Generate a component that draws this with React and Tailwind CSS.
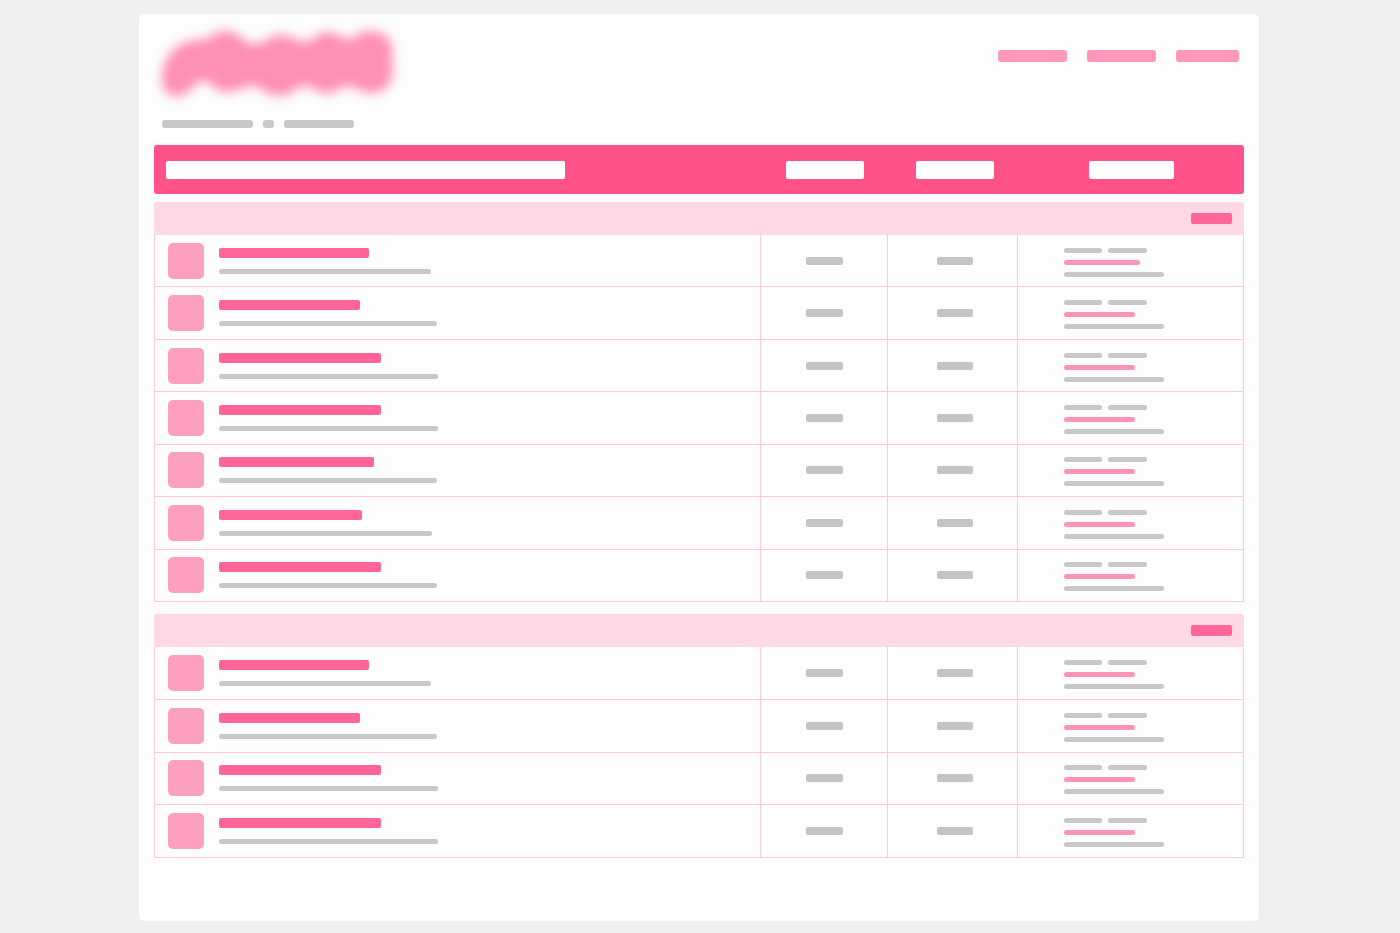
import React from 'react';

const navLinks = [
  { label: 'Home', width: 'w-[69px]' },
  { label: 'Members', width: 'w-[69px]' },
  { label: 'Search', width: 'w-[63px]' },
];

const groups = [
  {
    id: 'general',
    height: 'h-[367px]',
    rows: [
      { title: 'w-[150px]', text: 'w-[212px]', last: 'w-[76px]' },
      { title: 'w-[141px]', text: 'w-[218px]', last: 'w-[71px]' },
      { title: 'w-[162px]', text: 'w-[219px]', last: 'w-[71px]' },
      { title: 'w-[162px]', text: 'w-[219px]', last: 'w-[71px]' },
      { title: 'w-[155px]', text: 'w-[218px]', last: 'w-[71px]' },
      { title: 'w-[143px]', text: 'w-[213px]', last: 'w-[71px]' },
      { title: 'w-[162px]', text: 'w-[218px]', last: 'w-[71px]' },
    ],
  },
  {
    id: 'community',
    height: 'h-[211px]',
    rows: [
      { title: 'w-[150px]', text: 'w-[212px]', last: 'w-[71px]' },
      { title: 'w-[141px]', text: 'w-[218px]', last: 'w-[71px]' },
      { title: 'w-[162px]', text: 'w-[219px]', last: 'w-[71px]' },
      { title: 'w-[162px]', text: 'w-[219px]', last: 'w-[71px]' },
    ],
  },
];

function Logo() {
  return (
    <svg width="250" height="80" viewBox="0 0 250 80" overflow="visible" aria-hidden="true">
      <defs>
        <filter id="logo-blur" x="-15%" y="-40%" width="130%" height="180%" colorInterpolationFilters="sRGB">
          <feGaussianBlur stdDeviation="5.5" />
        </filter>
      </defs>
      <g filter="url(#logo-blur)" fill="#fe8fb5">
        <path d="M8 57C7 35 22 16 45 16C56 16 60 7 73 7C86 7 89 20 101 20C112 20 114 11 126 11C139 11 142 18 151 18C160 18 162 8 173 8C185 8 187 15 195 15C202 15 204 7 216 7C232 7 240 18 238 30C237 38 240 42 238 51C236 64 228 69 216 69C205 69 202 62 195 62C187 62 184 69 173 69C162 69 160 62 151 62C142 62 138 72 125 72C112 72 108 62 98 62C89 62 84 68 72 68C61 68 58 57 49 57C40 57 36 72 24 72C14 72 8 66 8 57Z" />
      </g>
    </svg>
  );
}

function BoardRow({ row }) {
  return (
    <tr>
      <td className="border-b border-l border-[#fdc8d8] pl-[13px]">
        <div className="flex items-center gap-[15px]">
          <div className="w-9 h-9 rounded-[5px] bg-[#fda0c0]" />
          <div className="space-y-[11px]">
            <div className={`h-2.5 rounded-xs bg-[#ff6597] ${row.title}`} />
            <div className={`h-[5px] rounded-full bg-[#c8c8c8] ${row.text}`} />
          </div>
        </div>
      </td>
      <td className="border-b border-l border-[#fdc8d8] pl-[45px]">
        <div className="w-[37px] h-2 rounded-xs bg-[#c4c4c4]" />
      </td>
      <td className="border-b border-l border-[#fdc8d8] pl-[49px]">
        <div className="w-[36px] h-2 rounded-xs bg-[#c4c4c4]" />
      </td>
      <td className="border-b border-x border-[#fdc8d8] pl-[46px] pt-[3px]">
        <div className="space-y-[7px]">
          <div className="flex gap-1.5">
            <div className="w-[38px] h-[5px] rounded-full bg-[#c8c8c8]" />
            <div className="w-[39px] h-[5px] rounded-full bg-[#c8c8c8]" />
          </div>
          <div className={`h-[5px] rounded-full bg-[#fd93b6] ${row.last}`} />
          <div className="w-[100px] h-[5px] rounded-full bg-[#c8c8c8]" />
        </div>
      </td>
    </tr>
  );
}

function BoardGroup({ group }) {
  return (
    <section>
      {/* Group band */}
      <div className="h-[33px] flex items-center justify-end pr-3 rounded-t-[3px] bg-[#fdd9e6]">
        <button type="button" aria-label="Toggle group" className="w-[41px] h-[11px] rounded-xs bg-[#ff6798]" />
      </div>
      <table className={`w-full table-fixed border-separate border-spacing-0 ${group.height}`}>
        <colgroup>
          <col />
          <col className="w-[127px]" />
          <col className="w-[130px]" />
          <col className="w-[227px]" />
        </colgroup>
        <tbody>
          {group.rows.map((row, i) => (
            <BoardRow key={i} row={row} />
          ))}
        </tbody>
      </table>
    </section>
  );
}

export default function App() {
  return (
    <div className="min-h-screen bg-[#f0f0f0] pt-3.5 pb-3 pr-0.5">
      <main className="max-w-[1120px] mx-auto px-[15px] pt-2.5 pb-[63px] rounded-[5px] bg-[#fdfdfd]">

        {/* Header */}
        <header className="flex items-start justify-between">
          <a href="#home" aria-label="Home">
            <Logo />
          </a>
          <nav className="flex gap-5 pt-[26px] pr-[5px]">
            {navLinks.map((link) => (
              <a
                key={link.label}
                href={`#${link.label.toLowerCase()}`}
                aria-label={link.label}
                className={`h-3 rounded-[3px] bg-[#fe98ba] ${link.width}`}
              />
            ))}
          </nav>
        </header>

        {/* Breadcrumb */}
        <div className="flex pl-2 mt-4">
          <div className="w-[91px] h-2 rounded-[3px] bg-[#c8c8c8]" />
          <div className="w-[11px] h-2 ml-2.5 rounded-[3px] bg-[#c8c8c8]" />
          <div className="w-[70px] h-2 ml-2.5 rounded-[3px] bg-[#c8c8c8]" />
        </div>

        {/* Column headings */}
        <div className="mt-[17px] h-[49px] grid grid-cols-[1fr_127px_130px_227px] items-center rounded-[3px] bg-[#ff5288]">
          <div className="pl-3">
            <div className="max-w-[399px] h-[18px] rounded-xs bg-[#fefefe]" />
          </div>
          <div className="pl-[26px]">
            <div className="w-[78px] h-[18px] rounded-xs bg-[#fefefe]" />
          </div>
          <div className="pl-[29px]">
            <div className="w-[78px] h-[18px] rounded-xs bg-[#fefefe]" />
          </div>
          <div className="pl-[72px]">
            <div className="w-[85px] h-[18px] rounded-xs bg-[#fefefe]" />
          </div>
        </div>

        <div className="mt-2 space-y-3">
          {groups.map((group) => (
            <BoardGroup key={group.id} group={group} />
          ))}
        </div>
      </main>
    </div>
  );
}
